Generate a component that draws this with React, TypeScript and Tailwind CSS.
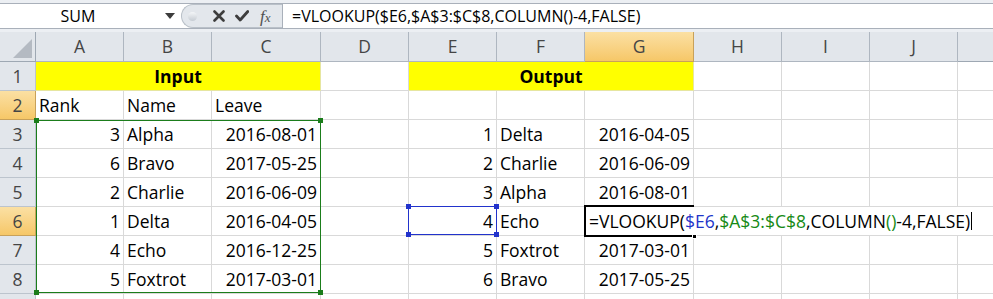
import React from 'react';

type Cell = { t?: string; r?: boolean };

// column widths (right gridline included)
const W = [
  'w-[88px]',
  'w-[88px]',
  'w-[109px]',
  'w-[88px]',
  'w-[88px]',
  'w-[88px]',
  'w-[109px]',
  'w-[88px]',
  'w-[88px]',
  'w-[88px]',
];
const LETTERS = ['A', 'B', 'C', 'D', 'E', 'F', 'G', 'H', 'I', 'J'];

const n = (t: string): Cell => ({ t, r: true });
const s = (t: string): Cell => ({ t });
const e: Cell = {};

const ROWS: Cell[][] = [
  [s('Rank'), s('Name'), s('Leave'), e, e, e, e, e, e, e],
  [n('3'), s('Alpha'), n('2016-08-01'), e, n('1'), s('Delta'), n('2016-04-05'), e, e, e],
  [n('6'), s('Bravo'), n('2017-05-25'), e, n('2'), s('Charlie'), n('2016-06-09'), e, e, e],
  [n('2'), s('Charlie'), n('2016-06-09'), e, n('3'), s('Alpha'), n('2016-08-01'), e, e, e],
  [n('1'), s('Delta'), n('2016-04-05'), e, n('4'), s('Echo'), e, e, e, e],
  [n('4'), s('Echo'), n('2016-12-25'), e, n('5'), s('Foxtrot'), n('2017-03-01'), e, e, e],
  [n('5'), s('Foxtrot'), n('2017-03-01'), e, n('6'), s('Bravo'), n('2017-05-25'), e, e, e],
  [e, e, e, e, e, e, e, e, e, e],
];

function FormulaBar() {
  return (
    <div className="h-[32px] bg-[#eceff3] pt-[3px]">
      <div className="flex h-[26px] border-y border-[#a9b0ba] bg-white">
        {/* Name box */}
        <div className="flex w-[181px] shrink-0 items-center">
          <span className="w-[156px] text-center text-[16px] leading-[24px] text-black">SUM</span>
          <svg width="10" height="6" viewBox="0 0 10 6" className="ml-[9px]">
            <path d="M0 0 H10 L5 6 Z" fill="#3c3c3c" />
          </svg>
        </div>
        {/* buttons */}
        <div className="flex w-[101px] shrink-0 items-center rounded-l-full border-y border-l border-[#b9c0c8] bg-[#e3e7ec]">
          <div className="ml-[6px] h-[9px] w-[9px] rounded-full bg-gradient-to-b from-[#f4f6f8] to-[#c6ccd3]" />
          <svg width="12" height="12" viewBox="0 0 12 12" className="ml-[16px]">
            <path d="M1.5 1.5 L10.5 10.5 M10.5 1.5 L1.5 10.5" stroke="#3d3d3d" strokeWidth="2.6" strokeLinecap="round" />
          </svg>
          <svg width="14" height="12" viewBox="0 0 14 12" className="ml-[10px]">
            <path d="M1.5 6 L5.2 10 L12.8 1.5" stroke="#3d3d3d" strokeWidth="2.8" fill="none" strokeLinecap="round" strokeLinejoin="round" />
          </svg>
          <span className="ml-[11px] font-['Liberation_Serif',serif] text-[17px] italic leading-none text-[#505050]">
            f<span className="text-[13px]">x</span>
          </span>
        </div>
        {/* Formula */}
        <div className="flex-1 border-l border-[#a9b0ba] pl-[9px] text-[16px] leading-[24px] text-black">
          =VLOOKUP($E6,$A$3:$C$8,COLUMN()-4,FALSE)
        </div>
      </div>
    </div>
  );
}

function HeaderRow() {
  return (
    <div className="flex h-[30px] text-[17.5px] leading-[29px] text-[#454545]">
      <div className="relative w-[36px] shrink-0 border-r border-b border-[#9ea8b3] bg-[#e2e6eb]">
        <svg width="36" height="30" className="absolute left-0 top-0">
          <path d="M32 7 L32 26 L13 26 Z" fill="#b4bac2" />
        </svg>
      </div>
      {LETTERS.map((l, i) => (
        <div
          key={l}
          className={`${W[i]} shrink-0 border-r border-b text-center ${
            l === 'G'
              ? 'border-[#c8a15a] bg-gradient-to-b from-[#fbe0a3] to-[#f6c767]'
              : 'border-[#aeb6c0] bg-[#e2e6eb]'
          }`}
        >
          {l}
        </div>
      ))}
      <div className="flex-1 border-b border-[#9ea8b3] bg-[#e2e6eb]" />
    </div>
  );
}

function RowHead({ num }: { num: number }) {
  const active = num === 2 || num === 6;
  return (
    <div
      className={`w-[36px] shrink-0 border-r border-b text-center text-[#454545] ${
        active
          ? 'border-[#c8a15a] bg-gradient-to-b from-[#fbe0a3] to-[#f6c767]'
          : 'border-[#bcc4cd] bg-[#e2e6eb]'
      }`}
    >
      {/* row 9 is only a sliver at the bottom edge, its number isn't visible */}
      {num < 9 ? num : null}
    </div>
  );
}

function TitleRow() {
  return (
    <div className="flex h-[29px] text-[17.5px] leading-[28px]">
      <RowHead num={1} />
      <div className="w-[285px] shrink-0 border-r border-b border-[#e6e6a0] bg-[#ffff00] text-center font-bold">Input</div>
      <div className="w-[88px] shrink-0 border-r border-b border-[#d9d9d9]" />
      <div className="w-[285px] shrink-0 border-r border-b border-[#e6e6a0] bg-[#ffff00] text-center font-bold">Output</div>
      {[7, 8, 9].map((i) => (
        <div key={i} className={`${W[i]} shrink-0 border-r border-b border-[#d9d9d9]`} />
      ))}
      <div className="flex-1 border-b border-[#d9d9d9]" />
    </div>
  );
}

function DataRow({ num, cells }: { num: number; cells: Cell[] }) {
  return (
    <div className="flex h-[29px] text-[17.5px] leading-[28px]">
      <RowHead num={num} />
      {cells.map((c, j) => (
        <div
          key={j}
          className={`${W[j]} shrink-0 overflow-hidden whitespace-nowrap border-r border-b border-[#d9d9d9] ${
            c.r ? 'pr-[3px] text-right' : 'pl-[3px] text-left'
          }`}
        >
          {c.t}
        </div>
      ))}
      <div className="flex-1 border-b border-[#d9d9d9]" />
    </div>
  );
}

function Handle({ className }: { className: string }) {
  return <div className={`absolute h-[5px] w-[5px] ${className}`} />;
}

export default function App() {
  return (
    <div className="relative h-[299px] w-[993px] overflow-hidden bg-white font-['Open_Sans',sans-serif] text-black">
      <FormulaBar />
      <HeaderRow />
      <TitleRow />
      {ROWS.map((r, i) => (
        <DataRow key={i} num={i + 2} cells={r} />
      ))}

      {/* range reference $A$3:$C$8 */}
      <div className="absolute left-[36px] top-[120px] h-[173px] w-[285px] border border-[#1b7d1b]" />
      <Handle className="left-[34px] top-[118px] bg-[#1b7d1b]" />
      <Handle className="left-[318px] top-[118px] bg-[#1b7d1b]" />
      <Handle className="left-[34px] top-[290px] bg-[#1b7d1b]" />
      <Handle className="left-[318px] top-[290px] bg-[#1b7d1b]" />

      {/* range reference $E6 */}
      <div className="absolute left-[408px] top-[206px] h-[29px] w-[89px] border border-[#2233cc]" />
      <Handle className="left-[406px] top-[204px] bg-[#2233cc]" />
      <Handle className="left-[494px] top-[204px] bg-[#2233cc]" />
      <Handle className="left-[406px] top-[232px] bg-[#2233cc]" />
      <Handle className="left-[494px] top-[232px] bg-[#2233cc]" />

      {/* cell in edit mode G6 */}
      <div className="absolute left-[586px] top-[207px] flex h-[28px] items-center whitespace-nowrap bg-white pl-[3px] pr-[4px] text-[17.5px] leading-[28px]">
        <span>=VLOOKUP(</span>
        <span className="text-[#1f35c9]">$E6</span>
        <span>,</span>
        <span className="text-[#168a16]">$A$3:$C$8</span>
        <span>,COLUMN</span>
        <span className="text-[#168a16]">()</span>
        <span>-4,FALSE)</span>
        <span className="ml-[1px] h-[18px] w-px bg-black" />
      </div>
      <div className="absolute left-[584px] top-[205px] h-[32px] w-[110px] border-2 border-r-0 border-black" />
      <div className="absolute left-[692px] top-[234px] h-[5px] w-[5px] border border-white bg-black" />
    </div>
  );
}
